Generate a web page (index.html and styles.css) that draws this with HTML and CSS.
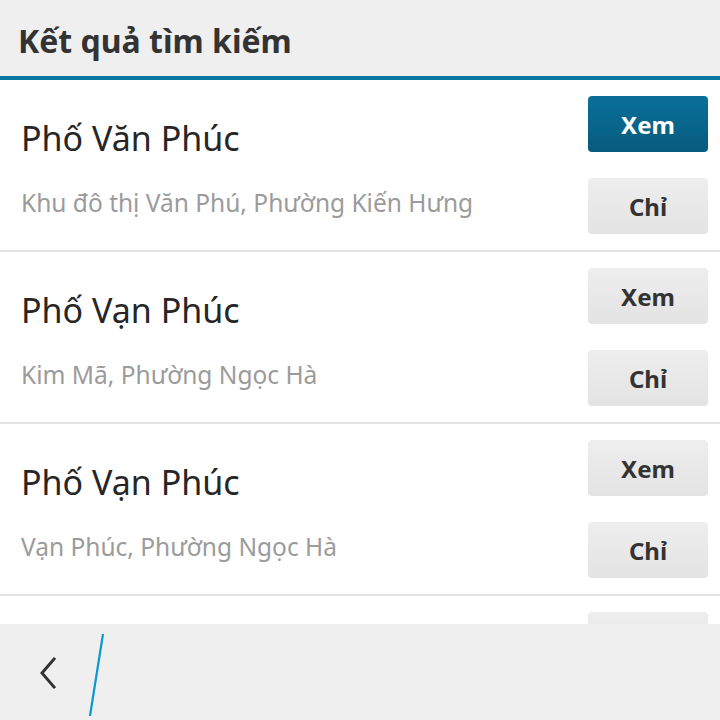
FILE: index.html
```html
<!DOCTYPE html>
<html lang="vi">
<head>
    <meta charset="UTF-8">
    <meta name="viewport" content="width=device-width, initial-scale=1.0">
    <title>Kết quả tìm kiếm</title>
    <link rel="stylesheet" href="styles.css">
</head>
<body>
    <div class="screen">
        <header class="title-bar">
            <h1>Kết quả tìm kiếm</h1>
        </header>

        <div class="results">
            <div class="result">
                <div class="result-text">
                    <div class="street">Phố Văn Phúc</div>
                    <div class="area">Khu đô thị Văn Phú, Phường Kiến Hưng</div>
                </div>
                <div class="result-actions">
                    <button class="btn btn-primary">Xem</button>
                    <button class="btn">Chỉ</button>
                </div>
            </div>
            <div class="result">
                <div class="result-text">
                    <div class="street">Phố Vạn Phúc</div>
                    <div class="area">Kim Mã, Phường Ngọc Hà</div>
                </div>
                <div class="result-actions">
                    <button class="btn">Xem</button>
                    <button class="btn">Chỉ</button>
                </div>
            </div>
            <div class="result">
                <div class="result-text">
                    <div class="street">Phố Vạn Phúc</div>
                    <div class="area">Vạn Phúc, Phường Ngọc Hà</div>
                </div>
                <div class="result-actions">
                    <button class="btn">Xem</button>
                    <button class="btn">Chỉ</button>
                </div>
            </div>
            <!-- next row, only the top of its button peeks above the bar -->
            <div class="result">
                <div class="result-text"></div>
                <div class="result-actions">
                    <div class="btn"></div>
                </div>
            </div>
        </div>

        <footer class="action-bar">
            <button class="back-btn" aria-label="Quay lại">
                <svg width="20" height="34" viewBox="0 0 20 34">
                    <path d="M16 3 L4 17 L16 31" fill="none" stroke="#333" stroke-width="3" stroke-linecap="square"/>
                </svg>
            </button>
            <svg class="divider-slash" width="20" height="82" viewBox="0 0 20 82">
                <line x1="15" y1="0" x2="2" y2="82" stroke="#0b97d3" stroke-width="2.2"/>
            </svg>
        </footer>
    </div>
</body>
</html>
```

FILE: styles.css
```css
* {
    box-sizing: border-box;
}
body {
    margin: 0;
    font-family: "Noto Sans", "Open Sans", sans-serif;
    background-color: #ffffff;
}
.screen {
    width: 720px;
    height: 720px;
    display: flex;
    flex-direction: column;
    overflow: hidden;
}
.title-bar {
    height: 80px;
    flex-shrink: 0;
    background-color: #efefef;
    border-bottom: 4px solid #0a76a3; /* Blue accent line */
    padding: 0 18px;
    display: flex;
    align-items: center;
}
.title-bar h1 {
    margin: 4px 0 0 0;
    font-size: 32px;
    font-weight: bold;
    color: #333333;
}
.results {
    flex: 1;
    overflow: hidden;
}
.result {
    height: 172px;
    border-bottom: 2px solid #e2e2e2;
    padding: 16px 12px 16px 21px;
    display: flex;
    justify-content: space-between;
}
.result-text {
    padding-top: 19px;
}
.street {
    font-size: 34px;
    color: #262626;
    line-height: 46px;
}
.area {
    margin-top: 25px;
    font-size: 24.5px;
    color: #9b9b9b;
    line-height: 34px;
}
.result-actions {
    display: flex;
    flex-direction: column;
    gap: 26px;
}
.btn {
    width: 120px;
    height: 56px;
    border: none;
    border-radius: 4px;
    font-family: inherit;
    font-size: 24px;
    font-weight: bold;
    color: #333333;
    background: linear-gradient(#eeeeee, #e3e3e3); /* Light grey button */
}
.btn-primary {
    color: #ffffff;
    background: linear-gradient(#0a7099, #065b7e); /* Selected blue button */
}
.action-bar {
    height: 96px;
    flex-shrink: 0;
    background-color: #efefef;
    display: flex;
    align-items: center;
    padding-left: 38px;
}
.back-btn {
    border: none;
    background: none;
    padding: 0;
    margin-top: 2px;
    display: flex;
}
.divider-slash {
    margin-left: 30px;
    margin-top: 6px;
}
```
